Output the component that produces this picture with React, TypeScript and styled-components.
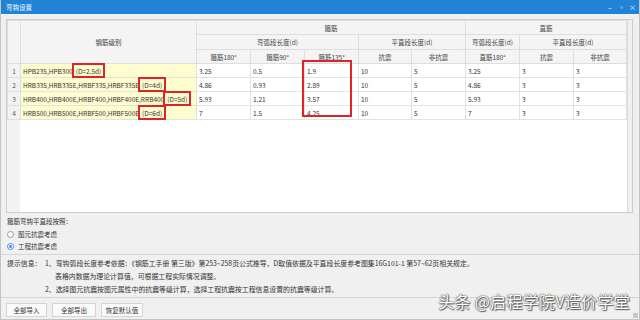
import styled, { createGlobalStyle } from "styled-components";

const GlobalStyle = createGlobalStyle`
  html, body {
    margin: 0;
    padding: 0;
  }
  body {
    width: 640px;
    height: 320px;
    overflow: hidden;
    background: #f0f0f0;
    font-family: "Noto Sans CJK SC", "Noto Sans", sans-serif;
    color: #333;
  }
`;

const colWidths = [13, 176, 54, 54, 54, 53, 54, 54, 54, 53];

const rows = [
  { no: 1, grade: "HPB235,HPB300", d: "(D=2.5d)", vals: ["3.25", "0.5", "1.9", "10", "5", "3.25", "3", "3"] },
  { no: 2, grade: "HRB335,HRB335E,HRBF335,HRBF335E", d: "(D=4d)", vals: ["4.86", "0.93", "2.89", "10", "5", "4.86", "3", "3"] },
  { no: 3, grade: "HRB400,HRB400E,HRBF400,HRBF400E,RRB400", d: "(D=5d)", vals: ["5.93", "1.21", "3.57", "10", "5", "5.93", "3", "3"] },
  { no: 4, grade: "HRB500,HRB500E,HRBF500,HRBF500E", d: "(D=6d)", vals: ["7", "1.5", "4.25", "10", "5", "7", "3", "3"] },
];

const Dialog = styled.div`
  position: relative;
  width: 640px;
  height: 320px;
  box-sizing: border-box;
  display: flex;
  flex-direction: column;
  border-bottom: 1px solid #c4c4c4;
  border-left: 1px solid #c4c4c4;
  border-right: 1px solid #c4c4c4;
`;

const TitleBar = styled.div`
  height: 14px;
  flex: none;
  background: #2183d6;
  display: flex;
  align-items: center;
  justify-content: space-between;
  padding: 0 4px 0 5px;
  color: #fff;
  font-size: 6.5px;
`;

const WinButtons = styled.div`
  display: flex;
  gap: 5px;
  align-items: center;
`;

const WinButton = styled.span`
  width: 6px;
  text-align: center;
  font-size: 7px;
  line-height: 7px;
  color: #fff;
`;

const Body = styled.div`
  flex: 1;
  display: flex;
  flex-direction: column;
  padding: 5px 6px 0 5px;
`;

const TableBox = styled.div`
  position: relative;
  height: 194px;
  box-sizing: border-box;
  border: 1px solid #cdcdcd;
  display: flex;
`;

const TableArea = styled.div`
  position: relative;
  flex: 1;
  background: linear-gradient(to right, #f2f2f2 13px, #fff 13px);
`;

const ScrollStrip = styled.div`
  width: 7px;
  background: #f0f0f0;
  border-left: 1px solid #dadada;
`;

const Grid = styled.table`
  border-collapse: collapse;
  table-layout: fixed;
  width: 619px;
  font-size: 6.5px;
`;

const HeadCell = styled.th<{ $h: number }>`
  height: ${(p) => p.$h}px;
  padding: 0;
  background: #f4f4f4;
  border: 1px solid #dedede;
  font-weight: normal;
  color: #444;
  text-align: center;
  white-space: nowrap;
  overflow: hidden;
`;

const NumCell = styled.td`
  height: 13px;
  padding: 0;
  background: #f2f2f2;
  border: 1px solid #dedede;
  color: #555;
  text-align: center;
`;

const Cell = styled.td<{ $yellow?: boolean }>`
  height: 13px;
  padding: 0 2px;
  background: ${(p) => (p.$yellow ? "#fdfdcf" : "#fff")};
  border: 1px solid #e2e2e2;
  color: #333;
  white-space: nowrap;
  overflow: visible;
`;

const GradeLine = styled.div`
  display: flex;
  align-items: center;
  height: 13px;
`;

const DBox = styled.span`
  display: inline-flex;
  align-items: center;
  box-sizing: border-box;
  height: 15px;
  margin-left: -1px;
  padding: 0 2px;
  border: 2px solid #e0232a;
`;

const ColumnMark = styled.div`
  position: absolute;
  left: 295px;
  top: 40px;
  width: 50px;
  height: 57px;
  box-sizing: border-box;
  border: 2px solid #e0232a;
  pointer-events: none;
`;

const Options = styled.div`
  padding: 3px 0 2px 1px;
  font-size: 6.5px;
  color: #333;
`;

const OptionTitle = styled.div`
  height: 11px;
  line-height: 11px;
  margin-bottom: 1px;
`;

const RadioRow = styled.label`
  display: flex;
  align-items: center;
  gap: 4px;
  height: 12px;
`;

const RadioDot = styled.span<{ $on?: boolean }>`
  width: 7px;
  height: 7px;
  box-sizing: border-box;
  border-radius: 50%;
  border: 1px solid ${(p) => (p.$on ? "#3a8ee6" : "#9a9a9a")};
  background: #fff;
  display: flex;
  align-items: center;
  justify-content: center;
  &::after {
    content: "";
    width: 3px;
    height: 3px;
    border-radius: 50%;
    background: ${(p) => (p.$on ? "#3a8ee6" : "transparent")};
  }
`;

const Tips = styled.div`
  margin: 0 -6px 0 -5px;
  padding: 2px 6px 1px 6px;
  border-top: 1px solid #d6d6d6;
  border-bottom: 1px solid #d6d6d6;
  display: grid;
  grid-template-columns: 38px 1fr;
  font-size: 6.9px;
  color: #333;
`;

const TipLabel = styled.div`
  line-height: 13px;
`;

const TipLines = styled.div`
  display: flex;
  flex-direction: column;
`;

const TipLine = styled.div<{ $indent?: boolean }>`
  line-height: 13px;
  padding-left: ${(p) => (p.$indent ? 10 : 0)}px;
  white-space: nowrap;
`;

const ButtonBar = styled.div`
  display: flex;
  gap: 5px;
  padding-top: 5px;
`;

const Button = styled.button<{ $w: number }>`
  width: ${(p) => p.$w}px;
  height: 14px;
  padding: 0;
  border: 1px solid #d4d4d4;
  background: #fafafa;
  font-family: inherit;
  font-size: 6.5px;
  color: #333;
`;

const Watermark = styled.div`
  position: absolute;
  right: 9px;
  bottom: 6px;
  font-size: 16px;
  color: #fff;
  letter-spacing: 0.3px;
  text-shadow: 0 0 1px #444, 0 0 2px #555, 1px 1px 1px #666;
`;

const Grip = styled.div`
  position: absolute;
  right: 1px;
  bottom: 1px;
  width: 5px;
  height: 5px;
  background: radial-gradient(circle, #999 0.6px, transparent 0.8px) 0 0 / 2px 2px;
`;

export default function App() {
  return (
    <>
      <GlobalStyle />
      <Dialog>
        <TitleBar>
          <span>弯钩设置</span>
          <WinButtons>
            <WinButton>–</WinButton>
            <WinButton>▫</WinButton>
            <WinButton>×</WinButton>
          </WinButtons>
        </TitleBar>
        <Body>
          <TableBox>
            <TableArea>
              <Grid>
                <colgroup>
                  {colWidths.map((w, i) => (
                    <col key={i} style={{ width: w }} />
                  ))}
                </colgroup>
                <thead>
                  <tr>
                    <HeadCell $h={13} rowSpan={3} />
                    <HeadCell $h={13} rowSpan={3}>钢筋级别</HeadCell>
                    <HeadCell $h={13} colSpan={5}>箍筋</HeadCell>
                    <HeadCell $h={13} colSpan={3}>直筋</HeadCell>
                  </tr>
                  <tr>
                    <HeadCell $h={14} colSpan={3}>弯弧段长度(d)</HeadCell>
                    <HeadCell $h={14} colSpan={2}>平直段长度(d)</HeadCell>
                    <HeadCell $h={14}>弯弧段长度(d)</HeadCell>
                    <HeadCell $h={14} colSpan={2}>平直段长度(d)</HeadCell>
                  </tr>
                  <tr>
                    {["箍筋180°", "箍筋90°", "箍筋135°", "抗震", "非抗震", "直筋180°", "抗震", "非抗震"].map((t, i) => (
                      <HeadCell $h={13} key={i}>{t}</HeadCell>
                    ))}
                  </tr>
                </thead>
                <tbody>
                  {rows.map((r) => (
                    <tr key={r.no}>
                      <NumCell>{r.no}</NumCell>
                      <Cell $yellow>
                        <GradeLine>
                          {r.grade}
                          <DBox>{r.d}</DBox>
                        </GradeLine>
                      </Cell>
                      {r.vals.map((v, i) => (
                        <Cell key={i}>{v}</Cell>
                      ))}
                    </tr>
                  ))}
                </tbody>
              </Grid>
              <ColumnMark />
            </TableArea>
            <ScrollStrip />
          </TableBox>
          <Options>
            <OptionTitle>箍筋弯钩平直段按照：</OptionTitle>
            <RadioRow>
              <RadioDot />
              图元抗震考虑
            </RadioRow>
            <RadioRow>
              <RadioDot $on />
              工程抗震考虑
            </RadioRow>
          </Options>
          <Tips>
            <TipLabel>提示信息：</TipLabel>
            <TipLines>
              <TipLine>1、弯钩弧段长度参考依据：《钢筋工手册 第三版》第253~258页公式推导，D取值依据及平直段长度参考图集16G101-1 第57~62页相关规定。</TipLine>
              <TipLine $indent>表格内数据为理论计算值，可根据工程实际情况调整。</TipLine>
              <TipLine>2、选择图元抗震按图元属性中的抗震等级计算，选择工程抗震按工程信息设置的抗震等级计算。</TipLine>
            </TipLines>
          </Tips>
          <ButtonBar>
            <Button $w={41}>全部导入</Button>
            <Button $w={44}>全部导出</Button>
            <Button $w={42}>恢复默认值</Button>
          </ButtonBar>
        </Body>
        <Watermark>头条 @启程学院V造价学堂</Watermark>
        <Grip />
      </Dialog>
    </>
  );
}
